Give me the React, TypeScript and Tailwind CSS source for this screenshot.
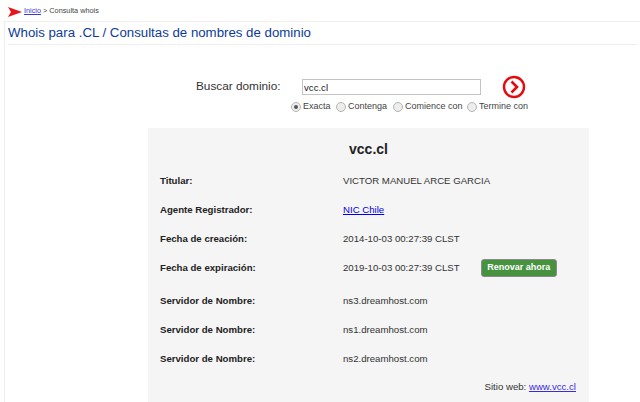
export default function App() {
  const rows: [string, React.ReactNode, string][] = [
    ["Titular:", "VICTOR MANUEL ARCE GARCIA", "h-[29px]"],
    ["Agente Registrador:", <a className="text-[#0000ee] underline">NIC Chile</a>, "h-[29px]"],
    ["Fecha de creación:", "2014-10-03 00:27:39 CLST", "h-[28px]"],
    ["Fecha de expiración:", "2019-10-03 00:27:39 CLST", "h-[30px]"],
    ["Servidor de Nombre:", "ns3.dreamhost.com", "h-[30px] mt-[3px]"],
    ["Servidor de Nombre:", "ns1.dreamhost.com", "h-[28px]"],
    ["Servidor de Nombre:", "ns2.dreamhost.com", "h-[30px]"],
  ];
  const radios = [
    ["Exacta", true, "w-[45px]"],
    ["Contenga", false, "w-[57px]"],
    ["Comience con", false, "w-[74px]"],
    ["Termine con", false, "w-[60px]"],
  ] as const;
  return (
    <div className="h-[402px] w-[640px] overflow-hidden bg-white font-['Liberation_Sans',Arial,sans-serif] text-[#333]">
      <div className="flex h-[21px] items-center gap-[2px] pl-[8px] pt-[2px] text-[7.3px] text-[#444]">
        <svg width="14" height="10" viewBox="0 0 14 10">
          <path d="M0 0 L14 5 L0 10 L3 5 Z" fill="#e8141c" />
        </svg>
        <a className="text-[#3a3ad0] underline">Inicio</a>
        <span>&gt; Consulta whois</span>
      </div>
      <div className="ml-[4px] h-[381px] border-l border-t border-[#eeeeee]">
        <div className="mx-[3px] flex h-[23px] items-center border-b border-[#eeeeee] text-[13.25px] text-[#0b3a9a]">
          Whois para .CL / Consultas de nombres de dominio
        </div>
        <div className="ml-[143px] w-[441px]">
          <div className="flex h-[83px] flex-col">
            <div className="mt-[21px] flex h-[29px] items-end">
              <span className="ml-[48px] w-[106px] pb-[1px] text-[11.8px] leading-[16px]">Buscar dominio:</span>
              <input
                readOnly
                value="vcc.cl"
                className="h-[16px] w-[179px] border border-[#c4c4c4] px-[1px] text-[9.65px] text-[#222] outline-none"
              />
              <svg width="24" height="24" viewBox="0 0 24 24" className="mb-[-4px] ml-[21px]">
                <circle cx="12" cy="12" r="10" fill="none" stroke="#e30b0b" strokeWidth="2.4" />
                <path d="M9.5 6.5 L15 12 L9.5 17.5" fill="none" stroke="#e30b0b" strokeWidth="2.6" />
              </svg>
            </div>
            <div className="ml-[143px] mt-[5px] flex h-[14px] items-center text-[9px] text-[#444]">
              {radios.map(([label, on, w]) => (
                <span key={label} className={`flex items-center ${w}`}>
                  <span className="mr-[2px] flex h-[10px] w-[10px] shrink-0 items-center justify-center rounded-full border border-[#b5b5b5] bg-[#ededed]">
                    {on && <span className="h-[4px] w-[4px] rounded-full bg-[#555]" />}
                  </span>
                  <span className="whitespace-nowrap">{label}</span>
                </span>
              ))}
            </div>
          </div>
          <div className="h-[274px] bg-[#f5f5f5] px-[12px]">
            <div className="flex h-[39px] items-center justify-center pt-[3px] text-[14px] font-bold text-[#222]">vcc.cl</div>
            {rows.map(([label, value, h], i) => (
              <div key={i} className={`flex items-center text-[9.65px] text-[#333] ${h}`}>
                <span className="w-[183px] font-bold text-[#222]">{label}</span>
                <span className="whitespace-nowrap">{value}</span>
                {i === 3 && (
                  <span className="ml-[21px] flex h-[18px] w-[76px] items-center justify-center rounded-[3px] border border-[#8a8a8a] bg-[#46923f] text-[9px] font-bold text-white">
                    Renovar ahora
                  </span>
                )}
              </div>
            ))}
            <div className="mt-[6px] pr-[1px] text-right text-[9.65px] text-[#333]">
              Sitio web: <a className="text-[#3a2bd8] underline">www.vcc.cl</a>
            </div>
          </div>
        </div>
      </div>
    </div>
  );
}
